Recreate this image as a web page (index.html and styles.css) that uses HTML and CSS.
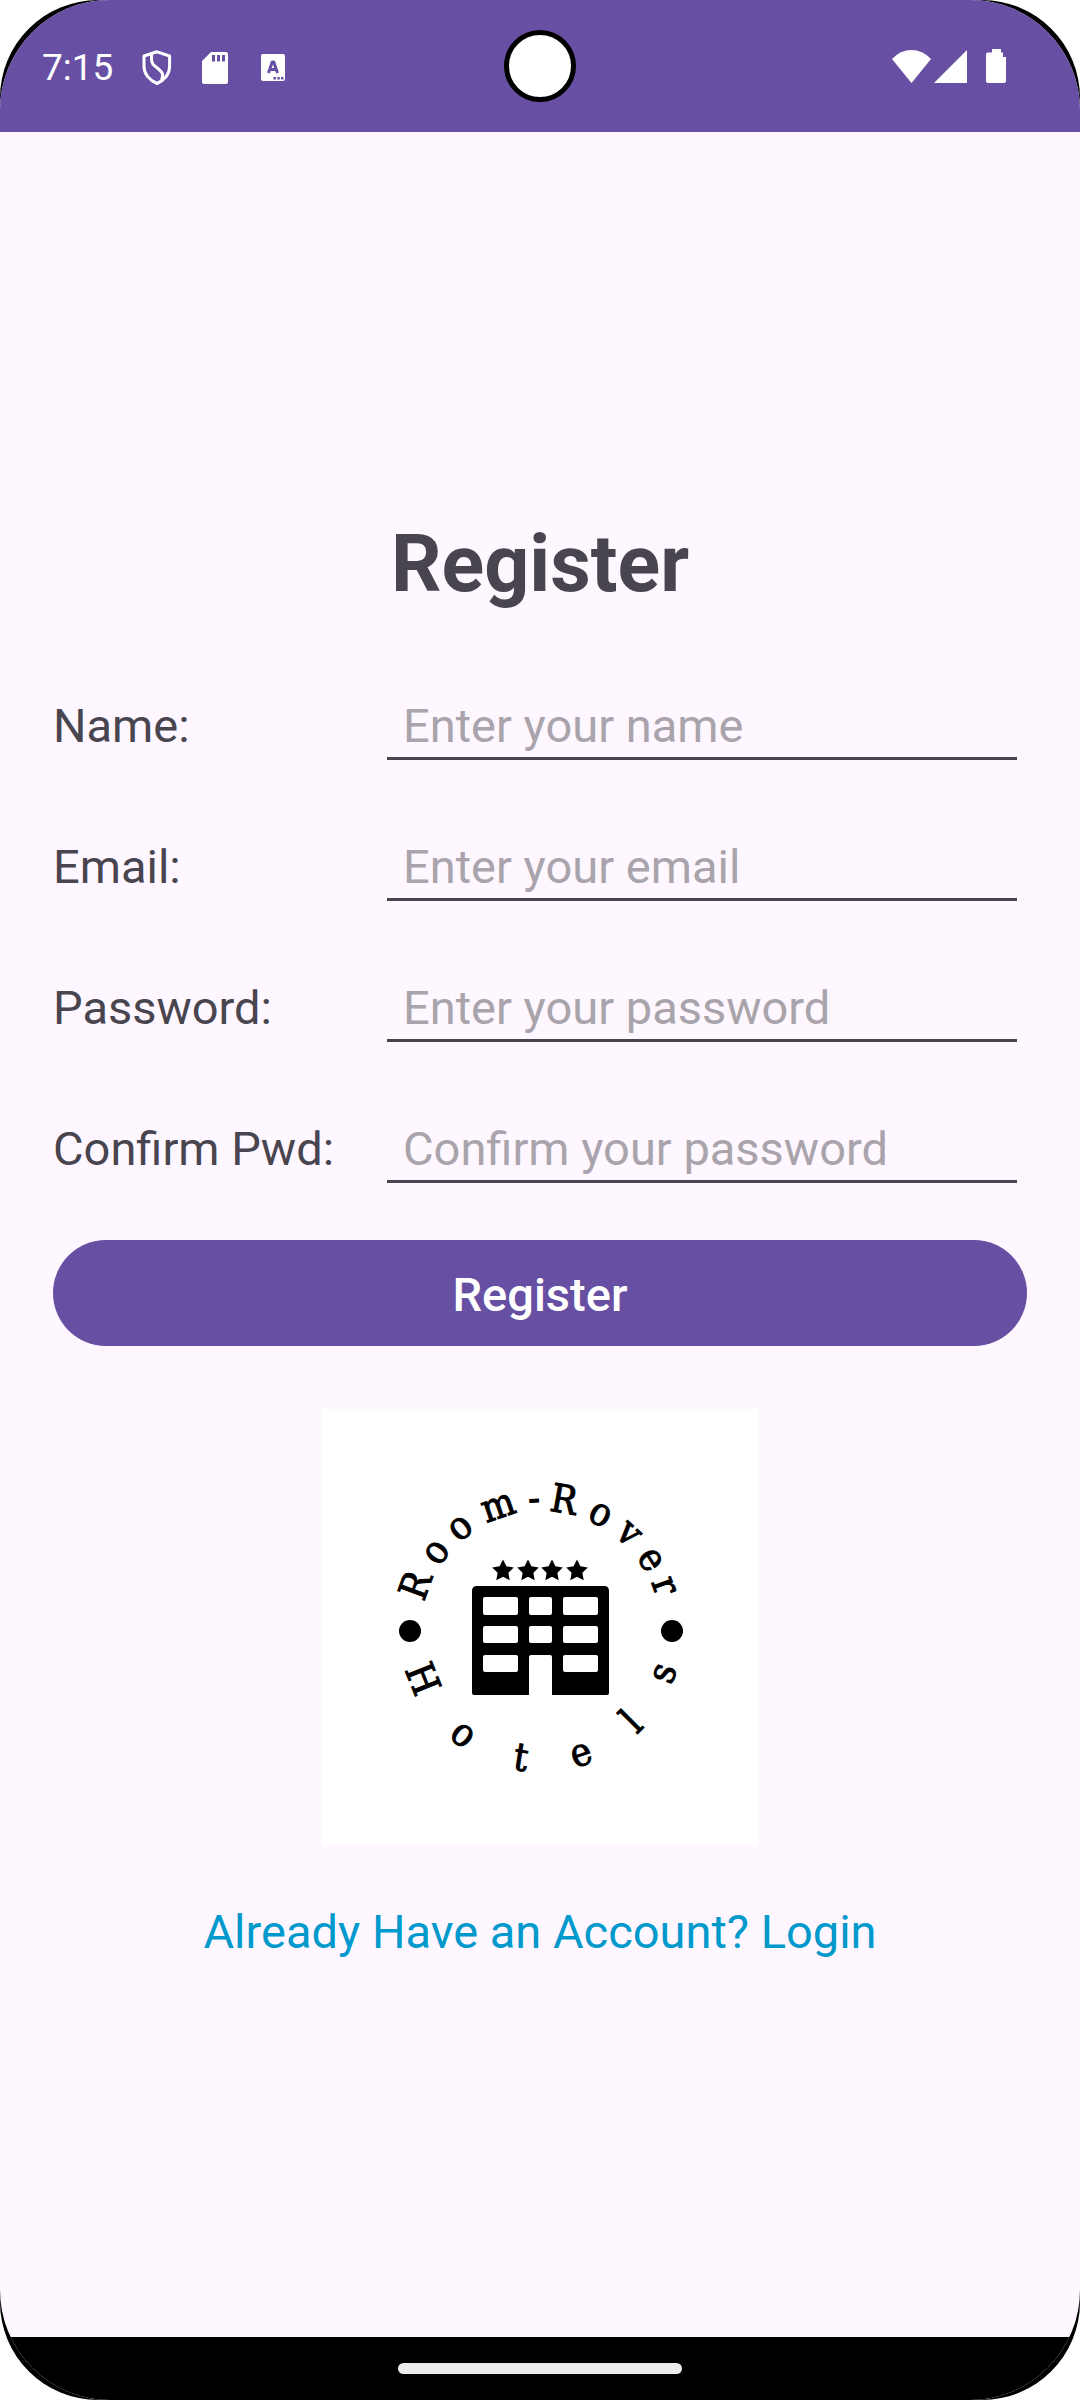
FILE: index.html
```html
<!DOCTYPE html>
<html lang="en">
<head>
<meta charset="utf-8">
<meta name="viewport" content="width=device-width, initial-scale=1">
<title>Register</title>
<link rel="stylesheet" href="styles.css">
</head>
<body>
<div class="device">
  <div class="screen">
    <header class="status-bar">
      <div class="status-left">
        <time class="clock">7:15</time>
        <svg class="icon-shield" width="30" height="36" viewBox="0 0 30 36" fill="none" stroke="#fff" stroke-width="3" stroke-linejoin="round" aria-hidden="true">
          <path d="M15 1.8 27.6 6V16.500C27.600 24 22.500 30.500 15 33.500C7.500 30.500 2 24 2 16.500V6Z"/>
          <path d="M9.500 4.500V9C9.500 15 13 16 16.500 19C20.500 22.500 22 24.500 19.500 30"/>
        </svg>
        <svg class="icon-sd" width="26" height="32" viewBox="0 0 26 32" aria-hidden="true">
          <path fill="#fff" fill-rule="evenodd" d="M9 0H24Q26 0 26 2V30Q26 32 24 32H2Q0 32 0 30V9ZM10 3V9.500H13V3ZM15 3V9.500H18V3ZM20 3V9.500H23V3Z"/>
        </svg>
        <svg class="icon-a" width="24" height="28" viewBox="0 0 24 28" aria-hidden="true">
          <rect width="24" height="27" rx="2" fill="#fff"/>
          <path d="M7.500 19 11.200 8H12.800L16.500 19M9 15.500H15" fill="none" stroke="#6750a4" stroke-width="3" stroke-linejoin="round"/>
          <path d="M12.500 23H15V25.500H12.500ZM16.300 23H18.800V25.500H16.300ZM20 23H22.500V25.500H20Z" fill="#6750a4"/>
        </svg>
      </div>
      <div class="camera"></div>
      <div class="status-right">
        <svg width="39" height="33" viewBox="0 0 39 33" aria-hidden="true">
          <path fill="#fff" d="M0 9Q8.500 0 19.500 0T39 9L19.500 33Z"/>
        </svg>
        <svg width="33" height="33" viewBox="0 0 33 33" aria-hidden="true">
          <path fill="#fff" d="M33 0V33H0Z"/>
        </svg>
        <svg class="icon-battery" width="20" height="34" viewBox="0 0 20 34" aria-hidden="true">
          <path fill="#fff" d="M6 0H15V3.500H17V8H20V32Q20 34 18 34H2Q0 34 0 32V5.500Q0 3.500 2 3.500H6Z"/>
        </svg>
      </div>
    </header>

    <main class="content">
      <h1 class="title">Register</h1>
      <form class="form">
        <div class="row">
          <label for="name">Name:</label>
          <input class="field" id="name" type="text" placeholder="Enter your name">
        </div>
        <div class="row">
          <label for="email">Email:</label>
          <input class="field" id="email" type="email" placeholder="Enter your email">
        </div>
        <div class="row">
          <label for="password">Password:</label>
          <input class="field" id="password" type="password" placeholder="Enter your password">
        </div>
        <div class="row">
          <label for="confirm">Confirm Pwd:</label>
          <input class="field" id="confirm" type="password" placeholder="Confirm your password">
        </div>
        <button class="submit" type="submit">Register</button>
      </form>

      <svg class="logo" viewBox="0 0 436 436" role="img" aria-label="Room-Rover Hotels">
        <defs>
          <path id="star" d="M0-11.400 3.400-4.700 10.800-3.500 5.400 1.800 6.700 9.200 0 5.800-6.700 9.200-5.400 1.800-10.800-3.500-3.400-4.700Z"/>
        </defs>
        <rect width="436" height="436" fill="#fff"/>
        <use href="#star" x="181" y="162"/>
        <use href="#star" x="206" y="162"/>
        <use href="#star" x="230" y="162"/>
        <use href="#star" x="255" y="162"/>
        <path d="M155 177H282Q287 177 287 182V284Q287 286 285 286H152Q150 286 150 284V182Q150 177 155 177Z"/>
        <g fill="#fff">
          <rect x="161" y="188" width="35" height="18" rx="2"/>
          <rect x="207" y="188" width="23" height="18" rx="2"/>
          <rect x="241" y="188" width="35" height="18" rx="2"/>
          <rect x="161" y="217" width="35" height="17" rx="2"/>
          <rect x="207" y="217" width="23" height="17" rx="2"/>
          <rect x="241" y="217" width="35" height="17" rx="2"/>
          <rect x="161" y="246" width="35" height="17" rx="2"/>
          <rect x="241" y="246" width="35" height="17" rx="2"/>
          <path d="M207 286V248Q207 246 209 246H228Q230 246 230 248V286Z"/>
        </g>
        <g class="ring" transform="translate(219 222)">
          <circle cx="-131" r="11"/>
          <circle cx="131" r="11"/>
          <text y="-120" transform="rotate(-70)">R</text>
          <text y="-120" transform="rotate(-53)">o</text>
          <text y="-120" transform="rotate(-38)">o</text>
          <text y="-120" transform="rotate(-19)">m</text>
          <text y="-120" transform="rotate(-3)">-</text>
          <text y="-120" transform="rotate(10)">R</text>
          <text y="-120" transform="rotate(27)">o</text>
          <text y="-120" transform="rotate(42)">v</text>
          <text y="-120" transform="rotate(57)">e</text>
          <text y="-120" transform="rotate(70)">r</text>
          <text y="141" transform="rotate(68)">H</text>
          <text y="141" transform="rotate(37)">o</text>
          <text y="141" transform="rotate(9)">t</text>
          <text y="141" transform="rotate(-18)">e</text>
          <text y="141" transform="rotate(-45)">l</text>
          <text y="141" transform="rotate(-71)">s</text>
        </g>
      </svg>

      <a class="login" href="#login">Already Have an Account? Login</a>
    </main>

    <footer class="nav-bar"><div class="nav-handle"></div></footer>
  </div>
</div>
</body>
</html>
```
FILE: styles.css
```css
* {
  box-sizing: border-box;
}

body {
  margin: 0;
  background: #fff;
  color: #49454f;
  font-family: Roboto, sans-serif;
  font-size: 47px;
}

.device {
  display: flex;
  min-height: 100vh;
  background: #000;
  border-radius: 98px;
  overflow: hidden;
}

.screen {
  flex: 1;
  display: flex;
  flex-direction: column;
  background: #fef7ff;
  border-radius: 110px;
  overflow: hidden;
}

.status-bar {
  display: grid;
  grid-template-columns: 1fr auto 1fr;
  align-items: center;
  height: 132px;
  padding: 0 42px;
  background: #6750a4;
  color: #fff;
}

.status-left,
.status-right {
  display: flex;
  align-items: center;
}

.status-left {
  padding-top: 3px;
}

.clock {
  font-size: 37px;
  line-height: 44px;
  margin-right: 29px;
}

.icon-sd {
  margin: 0 33px 0 30px;
}

.camera {
  width: 72px;
  height: 72px;
  background: #fff;
  border: 5px solid #000;
  border-radius: 50%;
}

.status-right {
  justify-content: flex-end;
  gap: 3px;
  padding-right: 32px;
}

.icon-battery {
  margin-left: 16px;
}

.content {
  flex: 1;
  display: flex;
  flex-direction: column;
  align-items: center;
  justify-content: center;
  padding: 5px 53px 0;
}

.title {
  margin: 0 0 39px;
  font-size: 79px;
  font-weight: 700;
  line-height: 104px;
}

.form {
  width: 100%;
}

.row {
  display: grid;
  grid-template-columns: 334px 1fr;
  align-items: center;
  height: 141px;
  padding-right: 10px;
}

.field {
  width: 100%;
  height: 69px;
  padding: 3px 16px 0;
  border: 0;
  border-bottom: 3px solid #49454f;
  border-radius: 0;
  background: none;
  color: inherit;
  font: inherit;
  outline: none;
}

.field::placeholder {
  color: #a9a4ab;
  opacity: 1;
}

.submit {
  display: block;
  width: 100%;
  height: 106px;
  margin-top: 21px;
  padding: 2px 0 0;
  border: 0;
  border-radius: 53px;
  background: #6750a4;
  color: #fff;
  font: inherit;
  font-weight: 500;
}

.logo {
  width: 436px;
  height: 436px;
  margin: 63px 0 57px;
}

.ring text {
  font-family: "DejaVu Serif Condensed", "DejaVu Serif", serif;
  font-size: 39px;
  text-anchor: middle;
  stroke: #000;
  stroke-width: 1px;
}

.login {
  color: #0099cc;
  line-height: 60px;
  text-decoration: none;
}

.nav-bar {
  display: flex;
  align-items: center;
  justify-content: center;
  height: 63px;
  background: #000;
}

.nav-handle {
  width: 284px;
  height: 11px;
  border-radius: 6px;
  background: #ebebeb;
}
```
